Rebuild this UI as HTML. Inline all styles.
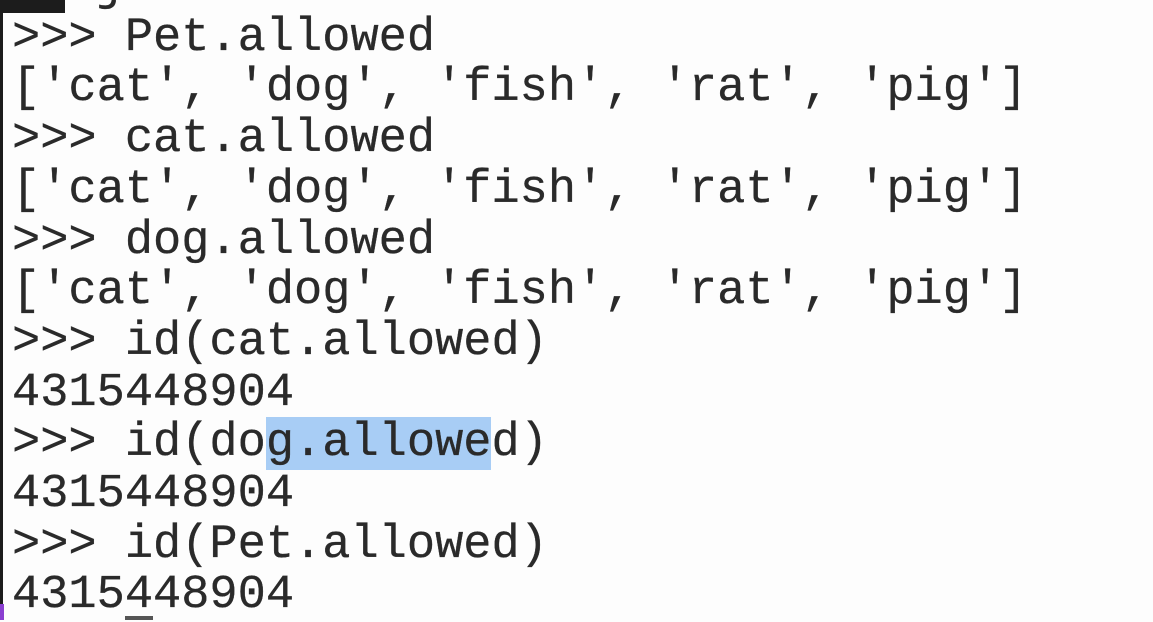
<!DOCTYPE html>
<html><head><meta charset="utf-8"><style>
html,body{margin:0;padding:0;width:1153px;height:620px;overflow:hidden;background:#fdfdfd;}
.t{position:absolute;left:12px;top:-37px;font-family:"Liberation Mono",monospace;font-size:47px;line-height:50.7px;color:#2a2a2a;white-space:pre;-webkit-text-stroke:0.3px #2a2a2a;}
.hl{background:#a8cdf5;}
.edge{position:absolute;left:0;top:0;width:3px;height:620px;background:#1c1c1c;}
.blk{position:absolute;left:0;top:0;width:65px;height:13px;background:#1c1c1c;}
.pur{position:absolute;left:0;top:604px;width:4px;height:16px;background:#8a3fd0;}
.cur{position:absolute;left:125px;top:616px;width:28px;height:4px;background:#555;}
</style></head><body>
<div class="t">   ject
&gt;&gt;&gt; Pet.allowed
['cat', 'dog', 'fish', 'rat', 'pig']
&gt;&gt;&gt; cat.allowed
['cat', 'dog', 'fish', 'rat', 'pig']
&gt;&gt;&gt; dog.allowed
['cat', 'dog', 'fish', 'rat', 'pig']
&gt;&gt;&gt; id(cat.allowed)
4315448904
&gt;&gt;&gt; id(do<span class="hl">g.allowe</span>d)
4315448904
&gt;&gt;&gt; id(Pet.allowed)
4315448904</div>
<div class="edge"></div><div class="blk"></div><div class="pur"></div><div class="cur"></div>
</body></html>
